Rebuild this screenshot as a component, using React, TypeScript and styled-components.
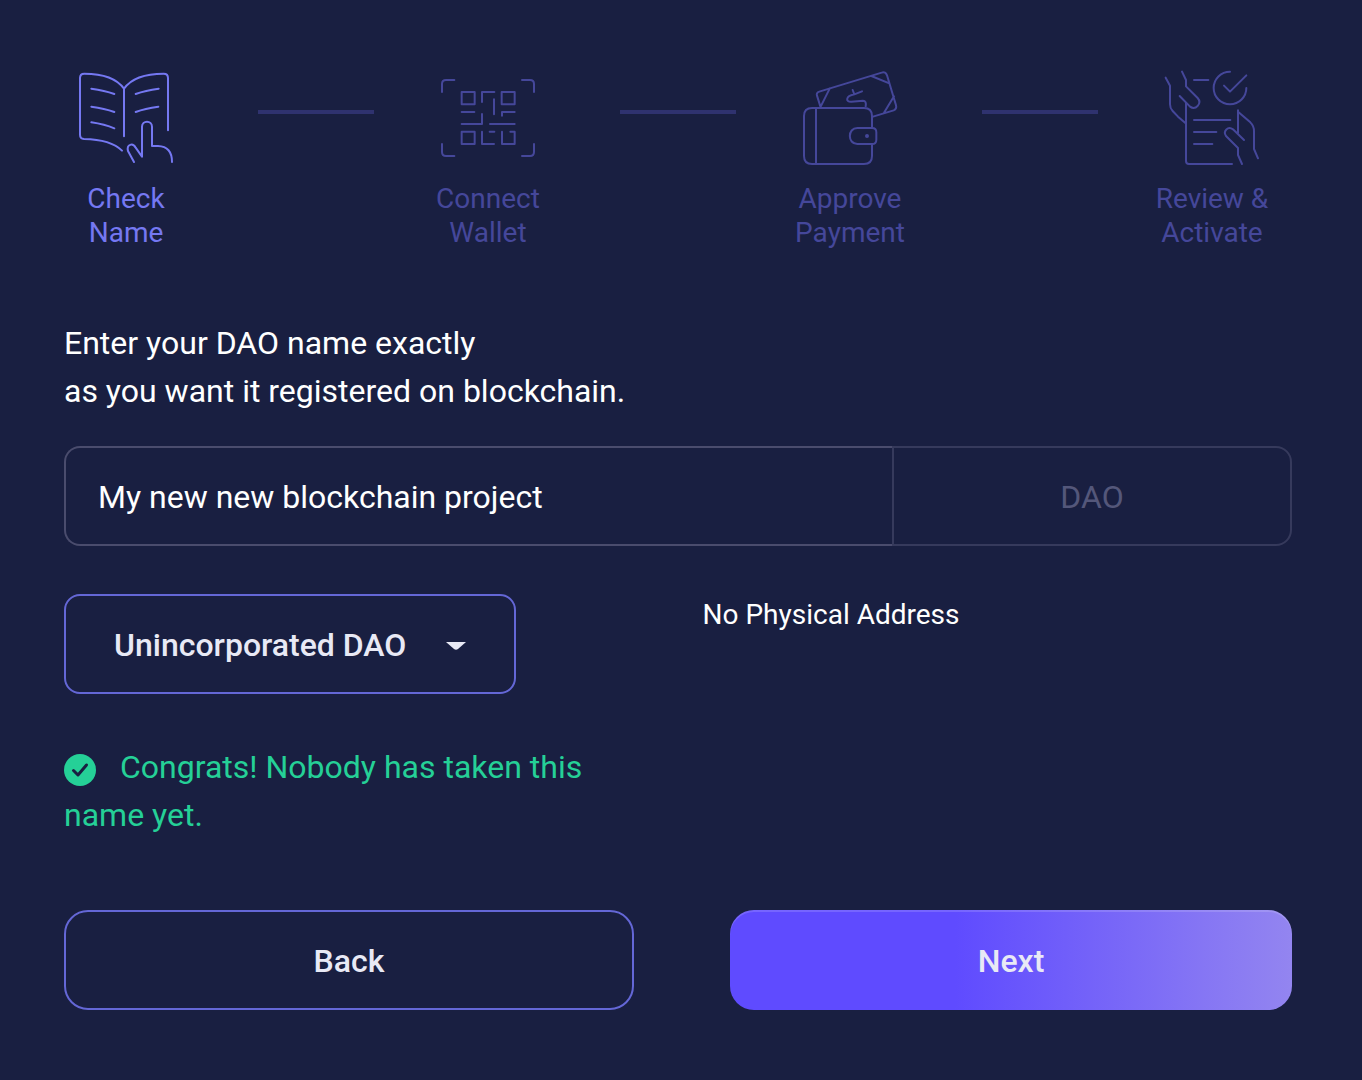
import React, { Fragment, useState } from "react";
import styled, { createGlobalStyle, css } from "styled-components";

const color = {
  page: "#191f41",
  text: "#ffffff",
  soft: "#e8e9f5",
  active: "#7578f2",
  idle: "#45479a",
  connector: "#2f326f",
  outline: "#6467d6",
  inputLine: "#4a4c6d",
  suffixLine: "#363a5c",
  suffixText: "#54577a",
  success: "#25d097",
};

const GlobalStyle = createGlobalStyle`
  *, *::before, *::after { box-sizing: border-box; }
  body {
    margin: 0;
    background: ${color.page};
    color: ${color.text};
    font-family: Roboto, "Noto Sans", sans-serif;
  }
  button, input, select { font: inherit; }
`;

const Page = styled.main`
  padding: 60px 70px 70px 64px;
`;

const Steps = styled.ol`
  display: flex;
  align-items: flex-start;
  margin: 0;
  padding: 0 18px 0 0;
  list-style: none;
`;

const Step = styled.li<{ $active: boolean }>`
  flex: 0 0 124px;
  display: flex;
  flex-direction: column;
  align-items: center;
  gap: 8px;
  color: ${(p) => (p.$active ? color.active : color.idle)};
`;

const StepIcon = styled.svg`
  width: 124px;
  height: 114px;
  fill: none;
  stroke: currentColor;
  stroke-width: 6;
  stroke-linecap: round;
  stroke-linejoin: round;
`;

const StepLabel = styled.span`
  font-size: 28px;
  line-height: 34px;
  text-align: center;
`;

const Connector = styled.li`
  flex: 1;
  height: 4px;
  margin: 50px 52px 0 70px;
  background: ${color.connector};
`;

const Form = styled.form`
  display: flex;
  flex-direction: column;
  margin-top: 69px;
`;

const Prompt = styled.label`
  font-size: 32px;
  line-height: 48px;
`;

const NameRow = styled.div`
  display: flex;
  margin-top: 31px;
`;

const field = css`
  height: 100px;
  min-width: 0;
  padding: 2px 32px 0;
  background: transparent;
  font-size: 32px;
  outline: none;
`;

const NameInput = styled.input`
  ${field}
  flex: 1;
  border: 2px solid ${color.inputLine};
  border-right: 0;
  border-radius: 16px 0 0 16px;
  color: ${color.text};
`;

const SuffixInput = styled.input`
  ${field}
  width: 400px;
  border: 2px solid ${color.suffixLine};
  border-radius: 0 16px 16px 0;
  color: ${color.suffixText};
  text-align: center;
`;

const TypeRow = styled.div`
  display: grid;
  grid-template-columns: 52fr 48fr;
  margin-top: 48px;
`;

const SelectWrap = styled.div`
  position: relative;
  justify-self: start;
`;

const TypeSelect = styled.select`
  appearance: none;
  width: 452px;
  height: 100px;
  padding: 2px 96px 0 48px;
  border: 2px solid ${color.outline};
  border-radius: 16px;
  background: transparent;
  color: ${color.soft};
  font-size: 32px;
  font-weight: 500;
`;

const Caret = styled.svg`
  position: absolute;
  top: 47px;
  right: 49px;
  width: 22px;
  height: 10px;
  fill: ${color.soft};
  pointer-events: none;
`;

const Address = styled.p`
  margin: 4px 0 0;
  font-size: 28px;
  line-height: 34px;
`;

const Status = styled.p`
  max-width: 570px;
  margin: 49px 0 0;
  color: ${color.success};
  font-size: 32px;
  line-height: 48px;
`;

const StatusIcon = styled.svg`
  width: 32px;
  height: 32px;
  margin-right: 24px;
  vertical-align: -8px;
`;

const Actions = styled.div`
  display: grid;
  grid-template-columns: 285fr 281fr;
  gap: 96px;
  margin-top: 71px;
`;

const Button = styled.button<{ $primary?: boolean }>`
  height: 100px;
  padding: 2px 32px 0;
  border-radius: 24px;
  color: ${color.soft};
  font-size: 32px;
  font-weight: 500;
  cursor: pointer;
  ${(p) =>
    p.$primary
      ? css`
          border: 0;
          background: linear-gradient(90deg, #5f4bff 40%, #9385f0 100%);
          box-shadow: inset 0 2px 0 rgba(255, 255, 255, 0.15);
        `
      : css`
          border: 2px solid ${color.outline};
          background: transparent;
        `}
`;

const BookIcon = () => (
  <StepIcon viewBox="0 0 372 342" aria-hidden="true">
    <path d="M174 272C150 248 112 238 60 237Q48 236 48 224V54Q48 41 61 41C112 41 156 52 180 86C204 52 248 41 299 41Q312 41 312 54V211M180 86V229" />
    <path d="M82 86Q122 91 151 102M82 140Q122 145 151 156M82 187Q122 193 151 205M284 86Q244 91 215 102M283 140Q243 145 215 156" />
    <path d="M210 306L192 273C187 252 207 248 215 263L234 290V200C234 180 264 180 264 200V258H282C310 259 324 273 324 306" />
  </StepIcon>
);

const CodeIcon = () => (
  <StepIcon viewBox="0 0 372 342" aria-hidden="true">
    <path d="M48 96V72Q48 60 60 60H85M288 60H312Q324 60 324 72V96M48 252V276Q48 288 60 288H85M288 288H312Q324 288 324 276V252" />
    <path d="M107 96H146V133H107ZM227 96H266V133H227ZM107 215H146V252H107ZM168 126V96H205M204 118V163M107 156H145M107 192H168V162M266 156H228V167M192 192H266M168 215V252H204M191 215H205M228 215V252H266V215H253" />
  </StepIcon>
);

const WalletIcon = () => (
  <StepIcon viewBox="0 0 372 342" aria-hidden="true">
    <path d="M252 204V168Q252 144 228 144H72Q48 144 48 168V288Q48 312 72 312H228Q252 312 252 288V252M84 144V312" />
    <path d="M252 204H208C178 204 178 252 208 252H252Q265 252 265 239V217Q265 204 252 204Z" />
    <circle cx="237" cy="228" r="3" />
    <path d="M98 142L87 107Q84 98 94 95L281 38Q293 34 297 46L324 136Q327 147 317 151L255 170M98 140L125 86M250 48L304 70M318 109L288 158" />
    <path d="M194 90L199 103L222 94M199 103C172 109 172 126 190 125L225 122Q236 122 233 139" />
  </StepIcon>
);

const ReviewIcon = () => (
  <StepIcon viewBox="0 0 372 342" aria-hidden="true">
    <path d="M47 53L60 77V133Q60 145 68 153L84 170L107 190M96 35L108 60V79L143 114C157 130 137 152 120 140L89 108M108 130V303Q108 312 117 312H246" />
    <path d="M132 60H175M132 180H241M132 216H199M132 252H187M240 35A49 49 0 1 0 289 84M222 77L240 95L289 46" />
    <path d="M264 151V219M264 155L301 187Q312 198 312 213V267L324 295M282 240L249 208C234 197 218 213 228 228L264 264V285L276 312" />
  </StepIcon>
);

const steps = [
  { lines: ["Check", "Name"], Icon: BookIcon },
  { lines: ["Connect", "Wallet"], Icon: CodeIcon },
  { lines: ["Approve", "Payment"], Icon: WalletIcon },
  { lines: ["Review &", "Activate"], Icon: ReviewIcon },
];

export default function App() {
  const [name, setName] = useState("My new new blockchain project");

  return (
    <Page>
      <GlobalStyle />
      <Steps>
        {steps.map(({ lines, Icon }, i) => (
          <Fragment key={lines[0]}>
            {i > 0 && <Connector aria-hidden="true" />}
            <Step $active={i === 0} aria-current={i === 0 ? "step" : undefined}>
              <Icon />
              <StepLabel>
                {lines[0]}
                <br />
                {lines[1]}
              </StepLabel>
            </Step>
          </Fragment>
        ))}
      </Steps>

      <Form onSubmit={(e) => e.preventDefault()}>
        <Prompt htmlFor="dao-name">
          Enter your DAO name exactly
          <br />
          as you want it registered on blockchain.
        </Prompt>
        <NameRow>
          <NameInput id="dao-name" value={name} onChange={(e) => setName(e.target.value)} />
          <SuffixInput aria-label="Name suffix" value="DAO" disabled />
        </NameRow>

        <TypeRow>
          <SelectWrap>
            <TypeSelect aria-label="DAO type">
              <option>Unincorporated DAO</option>
            </TypeSelect>
            <Caret viewBox="0 0 22 10" aria-hidden="true">
              <path d="M1 1H21L13 8Q11 9.600 9 8Z" />
            </Caret>
          </SelectWrap>
          <Address>No Physical Address</Address>
        </TypeRow>

        <Status role="status">
          <StatusIcon viewBox="0 0 32 32" aria-hidden="true">
            <circle cx="16" cy="16" r="16" fill={color.success} />
            <path
              d="M9.500 16.500L14 21L22.500 11"
              fill="none"
              stroke={color.page}
              strokeWidth="3"
              strokeLinecap="round"
              strokeLinejoin="round"
            />
          </StatusIcon>
          Congrats! Nobody has taken this name yet.
        </Status>

        <Actions>
          <Button type="button">Back</Button>
          <Button type="submit" $primary>
            Next
          </Button>
        </Actions>
      </Form>
    </Page>
  );
}
